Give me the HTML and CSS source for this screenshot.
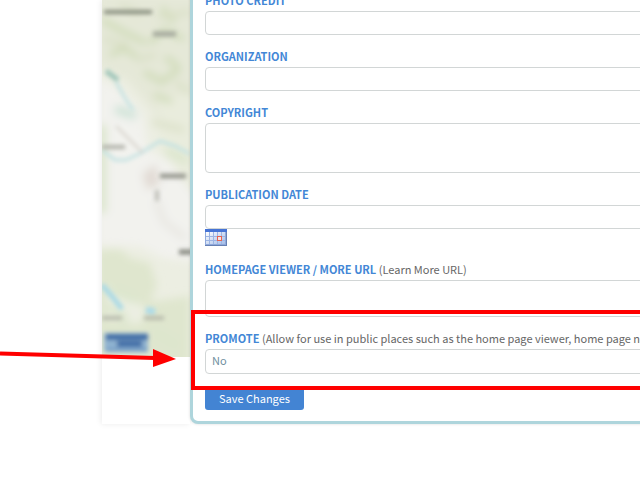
FILE: index.html
```
<!DOCTYPE html>
<html lang="en">
<head>
  <meta charset="UTF-8">
  <meta name="viewport" content="width=device-width, initial-scale=1.0">
  <title>Edit Item</title>
  <link rel="stylesheet" href="styles.css">
</head>
<body>
  <div class="page">
    <div class="map">
      <svg viewBox="0 0 88 357" width="88" height="357" aria-hidden="true">
        <defs>
          <filter id="soft" x="-20%" y="-20%" width="140%" height="140%"><feGaussianBlur stdDeviation="4"/></filter>
          <filter id="label" x="-20%" y="-60%" width="140%" height="220%"><feGaussianBlur stdDeviation="2"/></filter>
          <filter id="line" filterUnits="userSpaceOnUse" x="-10" y="-10" width="110" height="380"><feGaussianBlur stdDeviation="2"/></filter>
          <filter id="thin"><feGaussianBlur stdDeviation="2"/></filter>
        </defs>
        <rect width="88" height="357" fill="#eceee2"/>
        <!-- terrain -->
        <g filter="url(#soft)">
          <path d="M-5-5H95V185L70 155 52 112 25 80-5 66Z" fill="#e5e8d8"/>
          <path d="M-5 78L12 86 40 112 46 150 95 175V262L62 258 38 246-5 245Z" fill="#f2f2ee"/>
          <path d="M56 100L95 90V196L88 190 70 165 58 150Z" fill="#e9ecdd"/>
          <path d="M-5 250L18 249 28 258 48 263 55 285 48 302 88 296V370H-5Z" fill="#dfe6ce"/>
          <path d="M5 285L45 309 38 324 5 320Z" fill="#ecefe3"/>
          <path d="M0 20L20 31 44 43M8 55L22 48 35 57M48 43L62 30 82 39M60 8L72 22M42 72L60 82 78 68M52 95L70 102M63 57L76 66" stroke="#ccd9b2" stroke-width="5" fill="none"/>
          <path d="M18 5L38 14M2 39L26 45M56 17L88 12M34 60L54 55M74 82L88 94M50 122L82 130" stroke="#d9dfc5" stroke-width="5" fill="none"/>
          <path d="M13 109L34 116" stroke="#cfe3d8" stroke-width="9"/>
          <path d="M0 125V213M64 151L86 161M8 290L34 300M52 332L76 346M7 306L25 320" stroke="#dce6cd" stroke-width="9" fill="none"/>
          <path d="M40 174L54 164 58 185 45 190Z" fill="#e2dbd5"/>
          <path d="M54 200L62 222 83 238" stroke="#e6e4df" stroke-width="5" fill="none"/>
        </g>
        <!-- water and roads -->
        <g fill="none" filter="url(#thin)">
          <path d="M4 71L16 80" stroke="#9cc4b8" stroke-width="5"/>
          <path d="M14 82L23 98 31 110M0 150L13 160 24 160 39 153 58 141 73 146 88 154" stroke="#c4e2e2" stroke-width="3"/>
          <path d="M0 285L9 295 20 309" stroke="#a8d9e6" stroke-width="5"/>
          <path d="M44 310L53 312" stroke="#aedbe8" stroke-width="7"/>
          <path d="M14 126L27 139 41 153" stroke="#d4d0ca" stroke-width="2"/>
        </g>
        <!-- out of focus place names -->
        <g fill="none" filter="url(#line)">
          <path d="M2 12H50" stroke="#858b7c" stroke-width="4"/>
          <path d="M51 34H74" stroke="#a5a99e" stroke-width="5"/>
          <path d="M0 147H23" stroke="#b0b1a9" stroke-width="4"/>
          <path d="M58 176H84" stroke="#96988f" stroke-width="5"/>
          <path d="M55 190V201" stroke="#bdbdb6" stroke-width="4"/>
          <path d="M77 252H90" stroke="#85877f" stroke-width="5"/>
          <path d="M0 318H20M42 318H62" stroke="#b7baac" stroke-width="4"/>
        </g>
        <g filter="url(#label)">
          <path d="M2 333H46V352H2Z" fill="#8fb2d0"/>
          <path d="M4 337H46M15 344H40" stroke="#3e6ca6" stroke-width="6"/>
          <path d="M5 350H45" stroke="#6f98c4" stroke-width="3"/>
        </g>
      </svg>
    </div>

    <form class="modal">
      <div class="field">
        <label for="credit">PHOTO CREDIT</label>
        <input type="text" id="credit" name="credit">
      </div>

      <div class="field">
        <label for="organization">ORGANIZATION</label>
        <input type="text" id="organization" name="organization">
      </div>

      <div class="field">
        <label for="copyright">COPYRIGHT</label>
        <textarea id="copyright" name="copyright" class="tall"></textarea>
      </div>

      <div class="field">
        <label for="pubdate">PUBLICATION DATE</label>
        <input type="text" id="pubdate" name="pubdate">
        <button type="button" class="calendar" aria-label="Choose date">
          <svg viewBox="0 0 22 17" width="22" height="17" aria-hidden="true">
            <defs>
              <linearGradient id="cal" x2="1" y2="1">
                <stop offset="0" stop-color="#ffffff"/>
                <stop offset="1" stop-color="#a5bde8"/>
              </linearGradient>
            </defs>
            <rect width="22" height="17" fill="#8fa9dc"/>
            <rect x="1" y="3" width="19" height="12" fill="url(#cal)"/>
            <rect width="22" height="3" fill="#4674d5"/>
            <path d="M4.500 3V15M8.500 3V15M12.500 3V15M16.500 3V15M1 7.500H20M1 11.500H20" stroke="#9db5e4" fill="none"/>
            <rect x="12.500" y="7.500" width="4" height="4" fill="#f4e4e6" stroke="#e8624f"/>
            <path d="M0 16.500H22M21.500 3V17" stroke="#6780b2" fill="none"/>
          </svg>
        </button>
      </div>

      <div class="field">
        <label for="moreurl">HOMEPAGE VIEWER / MORE URL <span class="hint">(Learn More URL)</span></label>
        <textarea id="moreurl" name="moreurl"></textarea>
      </div>

      <div class="field promote">
        <label for="promote">PROMOTE <span class="hint">(Allow for use in public places such as the home page viewer, home page news)</span></label>
        <select id="promote" name="promote">
          <option>No</option>
          <option>Yes</option>
        </select>
        <div class="highlight"></div>
        <svg class="arrow" viewBox="0 0 176 20" width="176" height="20" aria-hidden="true">
          <path d="M0 5.500L155 10" stroke="#f00" stroke-width="4"/>
          <path d="M153 1L176 11 153 19Z" fill="#f00"/>
        </svg>
      </div>

      <button type="submit" class="save">Save Changes</button>
    </form>
  </div>
</body>
</html>
```
FILE: styles.css
```
body {
  margin: 0;
  background-color: #fff;
  font-family: "Noto Sans CJK SC", "Open Sans", sans-serif;
  font-size: 11px;
  color: #666;
}

.page {
  display: flex;
  align-items: stretch;
  padding-left: 102px;
  padding-bottom: 16px;
  overflow: hidden;
}

.map {
  flex: none;
  width: 88px;
  box-shadow: -1px 0 6px rgba(0, 0, 0, 0.08);
}
.map svg {
  display: block;
}

/* the form runs past the right side of the window */
.modal {
  position: relative;
  flex: 1;
  margin: -20px -40px 0 0;
  padding: 7px 12px 11px;
  border: 3px solid #aed5dc;
  border-radius: 8px;
  background-color: #fff;
  box-shadow: 0 0 3px rgba(0, 0, 0, 0.15);
}

.field {
  margin-bottom: 11px;
}

label {
  display: block;
  padding-bottom: 1px;
  line-height: 20px;
  color: #4387d6;
  font-weight: bold;
  white-space: nowrap;
}
.hint {
  color: #666;
  font-weight: normal;
}

input, textarea, select {
  display: block;
  box-sizing: border-box;
  width: 100%;
  height: 24px;
  margin: 0;
  padding: 0 6px;
  border: 1px solid #d2d6d6;
  border-radius: 4px;
  background-color: #fff;
  font: inherit;
  color: #7c9aaa;
}
textarea {
  height: 37px;
  resize: none;
}
textarea.tall {
  height: 50px;
}
select {
  height: 25px;
  padding-bottom: 3px;
  appearance: none;
  color: #6f8fa0;
}

.calendar {
  display: block;
  margin-bottom: 13px;
  padding: 0;
  border: 0;
  background: none;
}
.calendar svg {
  display: block;
}

.promote {
  position: relative;
  margin-bottom: 13px;
}

/* callout drawn over the promote field */
.highlight {
  position: absolute;
  top: -18px;
  left: -14px;
  right: -14px;
  height: 72px;
  border: 4px solid #f00;
}
.arrow {
  position: absolute;
  top: 20px;
  left: -205px;
}

.save {
  display: block;
  height: 23px;
  padding: 0 14px 1px;
  border: 0;
  border-radius: 3px;
  background-color: #4384d3;
  font: inherit;
  color: #fff;
}
```
